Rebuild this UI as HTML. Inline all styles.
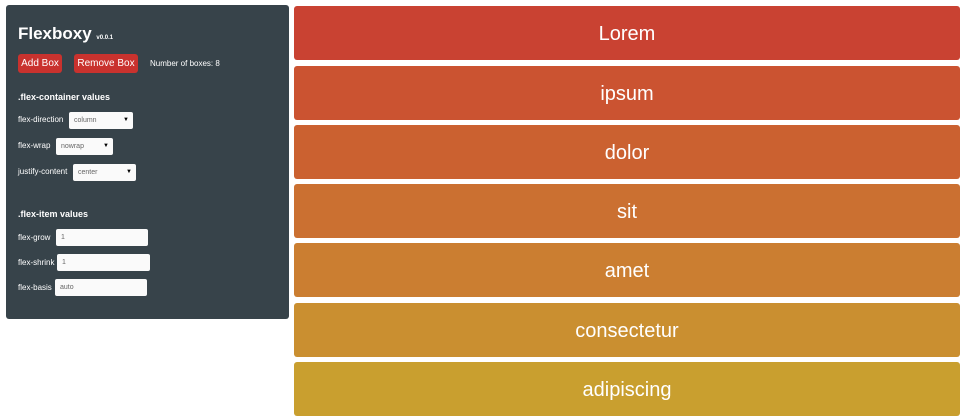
<!DOCTYPE html>
<html><head><style>
body{margin:0;width:964px;height:420px;background:#fff;font-family:"Liberation Sans",sans-serif;position:relative;overflow:hidden}
.panel{position:absolute;left:6px;top:5px;width:283px;height:314px;background:#37434a;border-radius:3px;color:#fff}
.a{position:absolute;white-space:nowrap}
.btn{position:absolute;background:#c9322e;border-radius:3px;color:#fff;font-size:10px;line-height:19px;text-align:center;top:49px;height:19px}
.lbl{font-size:8px}
.inp{position:absolute;background:#fafafa;border-radius:2px;font-size:7px;color:#666;display:flex;align-items:center;padding-left:5px;box-sizing:border-box;height:17px}
.inp b{position:absolute;right:4px;top:5px;font-size:6px;color:#000}
.box{position:absolute;left:294px;width:666px;height:54px;border-radius:3px;color:#fff;font-size:20px;text-align:center;line-height:56px}
</style></head><body>
<div class="panel">
<div class="a" style="left:12px;top:19px;font-size:17px;font-weight:bold">Flexboxy <span style="font-size:6px">v0.0.1</span></div>
<div class="btn" style="left:12px;width:44px">Add Box</div>
<div class="btn" style="left:68px;width:64px">Remove Box</div>
<div class="a lbl" style="left:144px;top:54px">Number of boxes: 8</div>
<div class="a" style="left:12px;top:87px;font-size:9px;font-weight:bold">.flex-container values</div>
<div class="a lbl" style="left:12px;top:110px">flex-direction</div>
<div class="inp" style="left:63px;top:107px;width:64px">column<b>▼</b></div>
<div class="a lbl" style="left:12px;top:136px">flex-wrap</div>
<div class="inp" style="left:50px;top:133px;width:57px">nowrap<b>▼</b></div>
<div class="a lbl" style="left:12px;top:162px">justify-content</div>
<div class="inp" style="left:67px;top:159px;width:63px">center<b>▼</b></div>
<div class="a" style="left:12px;top:204px;font-size:9px;font-weight:bold">.flex-item values</div>
<div class="a lbl" style="left:12px;top:228px">flex-grow</div>
<div class="inp" style="left:50px;top:224px;width:92px">1</div>
<div class="a lbl" style="left:12px;top:253px">flex-shrink</div>
<div class="inp" style="left:51px;top:249px;width:93px">1</div>
<div class="a lbl" style="left:12px;top:278px">flex-basis</div>
<div class="inp" style="left:49px;top:274px;width:92px">auto</div>
</div>
<div class="box" style="top:6px;background:#c94232">Lorem</div>
<div class="box" style="top:66px;background:#cb5331">ipsum</div>
<div class="box" style="top:125px;background:#cb6130">dolor</div>
<div class="box" style="top:184px;background:#cb7031">sit</div>
<div class="box" style="top:243px;background:#cb7e31">amet</div>
<div class="box" style="top:303px;background:#ca8f30">consectetur</div>
<div class="box" style="top:362px;background:#c99f2f">adipiscing</div>
</body></html>
